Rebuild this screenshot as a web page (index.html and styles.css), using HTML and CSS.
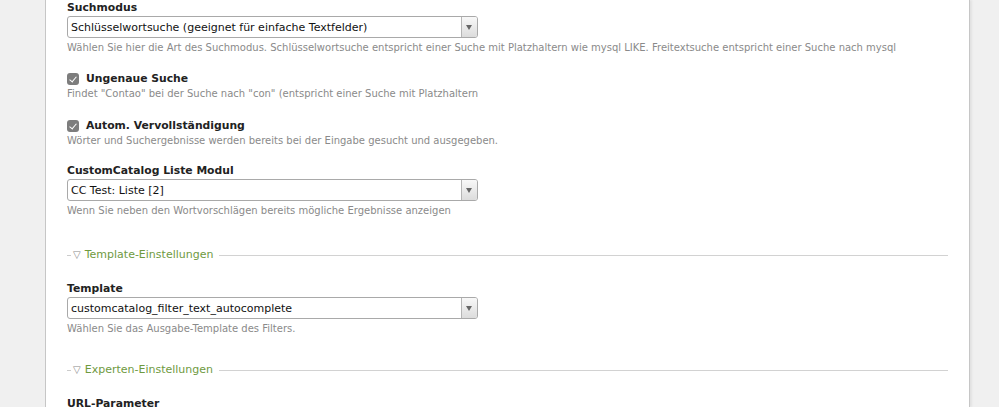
FILE: index.html
```html
<!DOCTYPE html>
<html lang="de">
<head>
    <meta charset="UTF-8">
    <title>Filter bearbeiten</title>
    <link rel="stylesheet" href="styles.css">
</head>
<body>
    <div class="side"></div>
    <div class="main">
        <div class="content">
            <div class="widget first">
                <h3>Suchmodus</h3>
                <div class="select"><span>Schlüsselwortsuche (geeignet für einfache Textfelder)</span><b class="arrow"></b></div>
                <p class="tip">Wählen Sie hier die Art des Suchmodus. Schlüsselwortsuche entspricht einer Suche mit Platzhaltern wie mysql LIKE. Freitextsuche entspricht einer Suche nach mysql</p>
            </div>
            <div class="widget check">
                <label><i class="box"></i>Ungenaue Suche</label>
                <p class="tip">Findet "Contao" bei der Suche nach "con" (entspricht einer Suche mit Platzhaltern</p>
            </div>
            <div class="widget check">
                <label><i class="box"></i>Autom. Vervollständigung</label>
                <p class="tip">Wörter und Suchergebnisse werden bereits bei der Eingabe gesucht und ausgegeben.</p>
            </div>
            <div class="widget">
                <h3>CustomCatalog Liste Modul</h3>
                <div class="select"><span>CC Test: Liste [2]</span><b class="arrow"></b></div>
                <p class="tip">Wenn Sie neben den Wortvorschlägen bereits mögliche Ergebnisse anzeigen</p>
            </div>
            <div class="legend"><span class="dash"></span><span class="tri">▽</span>Template-Einstellungen<span class="line"></span></div>
            <div class="widget">
                <h3>Template</h3>
                <div class="select"><span>customcatalog_filter_text_autocomplete</span><b class="arrow"></b></div>
                <p class="tip">Wählen Sie das Ausgabe-Template des Filters.</p>
            </div>
            <div class="legend expert"><span class="dash"></span><span class="tri">▽</span>Experten-Einstellungen<span class="line"></span></div>
            <div class="widget">
                <h3>URL-Parameter</h3>
            </div>
        </div>
    </div>
    <div class="side right"></div>
</body>
</html>
```

FILE: styles.css
```css
body {
    margin: 0;
    display: flex;
    height: 407px;
    overflow: hidden;
    background: #f0f0f0;
    font-family: "DejaVu Sans", Verdana, sans-serif;
}
.side {
    width: 45px;
    flex: none;
}
.side.right {
    flex: 1;
}
.main {
    width: 923px;
    flex: none;
    background: #ffffff;
    border-left: 1px solid #c6c6c6;
    border-right: 1px solid #c6c6c6;
    box-shadow: 2px 0 2px rgba(0, 0, 0, 0.06);
}
.content {
    padding: 0 21px;
}
.widget {
    margin-bottom: 17px;
}
.widget.first {
    margin-top: 1px;
    margin-bottom: 18px;
}
h3 {
    margin: 0 0 1px;
    font-size: 10.8px;
    line-height: 14px;
    font-weight: bold;
    color: #222;
}
.select {
    width: 409px;
    height: 20px;
    border: 1px solid #a9a9a9;
    border-radius: 3px;
    display: flex;
    align-items: center;
    font-size: 11px;
    color: #111;
    background: #fff;
}
.select span {
    flex: 1;
    padding-left: 3px;
}
.arrow {
    width: 15px;
    height: 20px;
    border-left: 1px solid #b5b5b5;
    background: linear-gradient(#f8f8f8, #dcdcdc);
    border-radius: 0 2px 2px 0;
    position: relative;
}
.arrow::after {
    content: "";
    position: absolute;
    left: 4px;
    top: 8px;
    border-left: 3.5px solid transparent;
    border-right: 3.5px solid transparent;
    border-top: 5px solid #666;
}
.tip {
    margin: 3px 0 0;
    font-size: 10px;
    line-height: 13px;
    color: #8a8a8a;
    white-space: nowrap;
}
.check {
    margin-bottom: 19px;
}
.check + .check {
    margin-bottom: 17px;
}
.check .tip {
    margin-top: 1px;
}
label {
    display: flex;
    align-items: center;
    font-size: 10.8px;
    line-height: 14px;
    font-weight: bold;
    color: #222;
}
.box {
    width: 12px;
    height: 12px;
    border-radius: 3px;
    background: #7d7d7d;
    margin-right: 7px;
    position: relative;
}
.box::after {
    content: "";
    position: absolute;
    left: 4px;
    top: 2px;
    width: 3px;
    height: 6px;
    border: solid #fff;
    border-width: 0 1.5px 1.5px 0;
    transform: rotate(40deg);
}
.legend {
    display: flex;
    align-items: center;
    margin: 31px 0 20px;
    font-size: 11px;
    line-height: 14px;
    color: #6f9a3f;
}
.legend.expert {
    margin-top: 28px;
}
.legend .dash {
    width: 4px;
    height: 1px;
    background: #ccc;
    margin-right: 2px;
}
.legend .tri {
    font-size: 10px;
    color: #888;
    margin-right: 4px;
}
.legend .line {
    flex: 1;
    height: 1px;
    background: #d2d2d2;
    margin: 0 0 0 6px;
}
```
